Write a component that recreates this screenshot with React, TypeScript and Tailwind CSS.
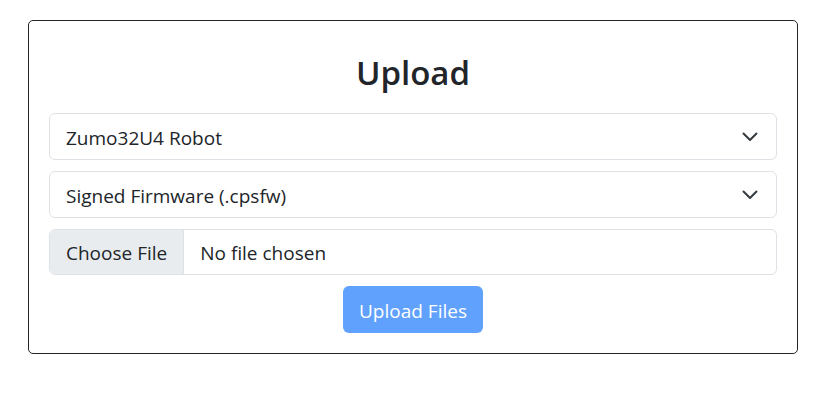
import React from "react";

function Chevron() {
  return (
    <svg width="16" height="10" viewBox="0 0 16 10" fill="none" className="shrink-0">
      <path d="M1.5 1.5 8 8 14.5 1.5" stroke="#343a40" strokeWidth="2" strokeLinecap="round" strokeLinejoin="round" />
    </svg>
  );
}

function FakeSelect({ label, className }: { label: string; className?: string }) {
  return (
    <div
      className={
        "flex h-[47px] items-center justify-between rounded-[6px] border border-[#dee2e6] bg-white pl-[16px] pr-[18px] text-[19px] text-[#212529] " +
        (className ?? "")
      }
    >
      <span className="pt-[3px]">{label}</span>
      <Chevron />
    </div>
  );
}

export default function App() {
  return (
    <div
      className="min-h-screen bg-white pl-[28px] pt-[20px]"
      style={{ fontFamily: '"Open Sans", "Noto Sans", sans-serif' }}
    >
      <div className="w-[770px] rounded-[5px] border border-[#212529] px-[20px] pb-[20px] pt-[28px]">
        <h2 className="mb-[16px] text-center text-[33px] font-semibold leading-[48px] text-[#212529]">Upload</h2>
        <FakeSelect label="Zumo32U4 Robot" className="mb-[11px]" />
        <FakeSelect label="Signed Firmware (.cpsfw)" className="mb-[11px]" />
        <div className="mb-[11px] flex h-[46px] overflow-hidden rounded-[6px] border border-[#dee2e6] text-[19px] text-[#212529]">
          <div className="flex items-center border-r border-[#dee2e6] bg-[#e9ecef] px-[16px] pt-[2px]">Choose File</div>
          <div className="flex items-center pl-[16px] pt-[2px]">No file chosen</div>
        </div>
        <div className="flex justify-center">
          <button className="flex h-[47px] items-center rounded-[6px] bg-[#61a1fe] px-[16px] pt-[3px] text-[19px] text-white">
            Upload Files
          </button>
        </div>
      </div>
    </div>
  );
}
